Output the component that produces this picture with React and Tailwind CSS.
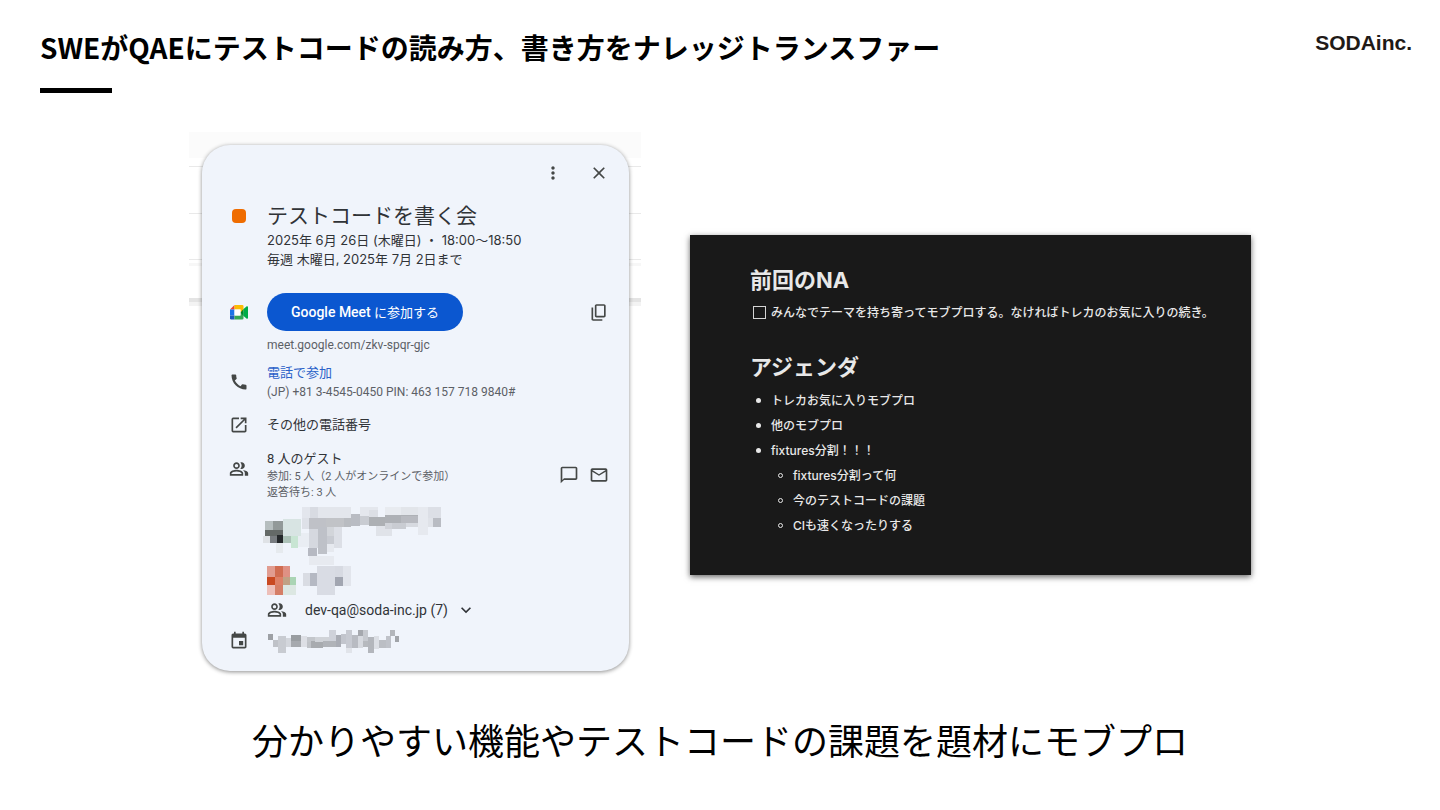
import {
  MdCall,
  MdChatBubbleOutline,
  MdClose,
  MdEvent,
  MdExpandMore,
  MdMailOutline,
  MdMoreVert,
  MdOpenInNew,
  MdOutlinePeopleAlt,
} from 'react-icons/md';

// [x, y, width, height, color]
const guestMosaic = [
  [182, 22, 26, 33, '#e3e6ed'],
  [208, 22, 22, 33, '#d8dbe2'],
  [230, 22, 100, 33, '#e3e6ec'],
  [358, 22, 52, 28, '#e4e7ed'],
  [384, 30, 26, 20, '#dcdfe5'],
  [432, 22, 48, 24, '#e8ebf0'],
  [480, 22, 52, 26, '#e2e5ea'],
  [532, 22, 30, 84, '#e6e9ef'],
  [562, 22, 37, 32, '#dcdfe6'],
  [576, 54, 23, 27, '#b9bcc3'],
  [562, 54, 14, 27, '#dfe2e8'],
  [330, 42, 28, 35, '#b9bcc3'],
  [308, 55, 22, 26, '#b9bcc1'],
  [256, 55, 52, 26, '#c1c3c7'],
  [204, 55, 52, 32, '#bfc1c7'],
  [182, 55, 22, 32, '#dee1e8'],
  [358, 48, 26, 26, '#c9ccd2'],
  [384, 50, 48, 27, '#adb0b4'],
  [432, 46, 100, 24, '#aeb1b6'],
  [480, 48, 52, 22, '#b8bac0'],
  [404, 77, 50, 30, '#e0e3e9'],
  [432, 70, 22, 18, '#d0d3d9'],
  [454, 70, 42, 18, '#c9ccd2'],
  [496, 70, 36, 12, '#d7dae0'],
  [204, 87, 26, 58, '#d5d8df'],
  [230, 81, 28, 82, '#bec1c8'],
  [258, 81, 22, 28, '#d2d5da'],
  [280, 81, 22, 28, '#dcdfe6'],
  [258, 109, 22, 22, '#c8cbd2'],
  [280, 109, 22, 36, '#dcdfe6'],
  [202, 145, 26, 22, '#b6b9c2'],
  [258, 131, 22, 26, '#e6e9ef'],
  [204, 168, 76, 26, '#e7eaf0'],
  [170, 100, 34, 40, '#e9edf3'],
  [72, 64, 24, 26, '#b6bebf'],
  [96, 64, 31, 26, '#929999'],
  [72, 90, 55, 18, '#646967'],
  [66, 108, 22, 20, '#dfe2e6'],
  [88, 108, 20, 20, '#787c80'],
  [108, 106, 19, 23, '#25282b'],
  [127, 56, 54, 52, '#d8e4e3'],
  [127, 108, 22, 22, '#adc2b8'],
  [149, 108, 22, 36, '#c8e5d3'],
  [106, 130, 20, 28, '#e6eaee'],
  // second guest
  [78, 198, 25, 33, '#e19c90'],
  [103, 198, 23, 33, '#d06c51'],
  [126, 198, 20, 33, '#df9184'],
  [78, 231, 25, 25, '#c94921'],
  [103, 231, 24, 25, '#dd8067'],
  [127, 231, 20, 25, '#c0a184'],
  [147, 231, 18, 25, '#aad4b4'],
  [78, 256, 25, 28, '#edbfb9'],
  [103, 256, 23, 28, '#d57e66'],
  [126, 256, 39, 28, '#dce7e2'],
  [186, 219, 22, 40, '#d9dce3'],
  [208, 219, 20, 40, '#b5b9c3'],
  [228, 198, 54, 87, '#d9dce4'],
  [282, 198, 24, 33, '#d7dae2'],
  [282, 231, 25, 27, '#a2a6b1'],
  [307, 198, 23, 60, '#e2e5ec'],
];

const calendarMosaic = [
  [232, 249, 15, 18, '#9da0a5'],
  [247, 267, 14, 20, '#bfc2c8'],
  [261, 254, 24, 53, '#c8cbd1'],
  [285, 262, 16, 26, '#d3d6dc'],
  [301, 252, 29, 17, '#999da1'],
  [301, 269, 29, 19, '#a6a9ae'],
  [330, 255, 17, 32, '#dddfe5'],
  [347, 257, 24, 16, '#c3c6cb'],
  [347, 273, 12, 18, '#c0c3c8'],
  [359, 271, 37, 20, '#a8abaf'],
  [371, 257, 43, 16, '#d0d3d8'],
  [396, 271, 38, 18, '#b0b3b8'],
  [414, 236, 20, 35, '#cfd2da'],
  [434, 252, 16, 37, '#a9acb4'],
  [450, 250, 14, 28, '#c2c5cd'],
  [464, 236, 19, 54, '#c7cad2'],
  [464, 290, 19, 15, '#e1e4ea'],
  [483, 252, 17, 38, '#b8bbc2'],
  [500, 236, 15, 18, '#a5a8ae'],
  [515, 236, 15, 46, '#c6c9cf'],
  [500, 254, 15, 36, '#d6d9df'],
  [515, 270, 15, 18, '#b6b9be'],
  [530, 257, 18, 50, '#b3b6bc'],
  [548, 255, 15, 38, '#dcdfe5'],
  [563, 268, 35, 24, '#bbbec4'],
  [584, 255, 15, 37, '#bfc2c9'],
  [598, 236, 13, 18, '#b3b6bb'],
  [611, 254, 14, 18, '#a1a4a9'],
];

const topics = ['トレカお気に入りモブプロ', '他のモブプロ', 'fixtures分割！！！'];
const subTopics = ['fixtures分割って何', '今のテストコードの課題', 'CIも速くなったりする'];

function Mosaic({ cells, viewBox, className }) {
  return (
    <svg viewBox={viewBox} className={className} shapeRendering="crispEdges" aria-hidden="true">
      {cells.map(([x, y, width, height, fill], index) => (
        <rect key={index} x={x} y={y} width={width} height={height} fill={fill} />
      ))}
    </svg>
  );
}

function MeetLogo() {
  return (
    <svg viewBox="0 0 36 30" className="h-[15px] w-[18px]" aria-hidden="true">
      <path fill="#ea4335" d="M0 9 9 0v9z" />
      <path fill="#fbbc04" d="M9 0h15.500a2.500 2.500 0 0 1 2.500 2.500V13l-6 2V9H9z" />
      <path fill="#1a73e8" d="M0 9h9v12H0z" />
      <path fill="#185abc" d="M0 21h9v8H2.500A2.500 2.500 0 0 1 0 26.500z" />
      <path fill="#34a853" d="M9 21h12v-6l6-1v12.500a2.500 2.500 0 0 1-2.500 2.500H9z" />
      <path fill="#00832d" d="M21 15l6-7v14z" />
      <path fill="#00ac47" d="M27 8l6.500-5.300c1-.8 2.500-.2 2.500 1.100v22.400c0 1.300-1.500 1.900-2.500 1.100L27 22z" />
      <path fill="#fff" d="M9 9h12v12H9z" />
    </svg>
  );
}

function CopyIcon() {
  return (
    <svg viewBox="0 -960 960 960" className="size-[21px]" fill="currentColor" aria-hidden="true">
      <path d="M360-240q-33 0-56.500-23.500T280-320v-480q0-33 23.500-56.500T360-880h360q33 0 56.500 23.500T800-800v480q0 33-23.500 56.500T720-240H360Zm0-80h360v-480H360v480ZM200-80q-33 0-56.500-23.500T120-160v-560h80v560h440v80H200Z" />
    </svg>
  );
}

function Row({ icon, children, action, className }) {
  return (
    <div className={`flex ${className}`}>
      <div className="flex w-[65px] shrink-0 items-center justify-center pl-2">{icon}</div>
      <div className="min-w-0 flex-1">{children}</div>
      {action}
    </div>
  );
}

function IconButton({ label, children }) {
  return (
    <button type="button" aria-label={label} className="flex size-5 items-center justify-center text-[#444746]">
      {children}
    </button>
  );
}

function EventCard() {
  return (
    <article className="rounded-[28px] bg-[#f0f4fb] pb-[17px] font-[Roboto,'Noto_Sans_CJK_JP',sans-serif] text-[13px] text-[#303337] shadow-[0_1px_4px_rgba(0,0,0,0.45)]">
      <div className="flex h-14 items-center justify-end gap-[26px] pr-5">
        <IconButton label="オプション"><MdMoreVert size={20} /></IconButton>
        <IconButton label="閉じる"><MdClose size={20} /></IconButton>
      </div>

      <div className="flex">
        <div className="flex w-[65px] shrink-0 justify-center pt-2 pl-2">
          <span className="size-[14px] rounded-[4px] bg-[#ef6c00]" />
        </div>
        <div>
          <h2 className="text-[21px] leading-[30px]">テストコードを書く会</h2>
          <div className="font-[Inter,'Noto_Sans_CJK_JP',sans-serif]">
            <p className="leading-[19px]">2025年 6月 26日 (木曜日) ・ 18:00〜18:50</p>
            <p className="leading-[19px]">毎週 木曜日, 2025年 7月 2日まで</p>
          </div>
        </div>
      </div>

      <Row
        className="mt-6"
        icon={<MeetLogo />}
        action={<div className="flex items-center pr-5"><IconButton label="コピー"><CopyIcon /></IconButton></div>}
      >
        <button type="button" className="h-[38px] w-[196px] rounded-full bg-[#0b57d0] text-white">
          <span className="text-[14px] font-medium">Google Meet</span> に参加する
        </button>
      </Row>
      <p className="mt-1 pl-[65px] text-[12px] leading-5 text-[#5c6066]">meet.google.com/zkv-spqr-gjc</p>

      <Row className="mt-2" icon={<MdCall size={20} className="text-[#444746]" />}>
        <a href="#phone" className="block leading-5 text-[#2b62c9]">電話で参加</a>
        <p className="text-[12px] leading-[18px] text-[#5c6066]">(JP) +81 3-4545-0450 PIN: 463 157 718 9840#</p>
      </Row>

      <Row className="mt-[14px]" icon={<MdOpenInNew size={20} className="text-[#444746]" />}>
        <p className="leading-5">その他の電話番号</p>
      </Row>

      <div className="mt-[14px] flex">
        <div className="flex w-[65px] shrink-0 justify-center pt-[10px] pl-2">
          <MdOutlinePeopleAlt size={20} className="text-[#444746]" />
        </div>
        <div className="flex-1">
          <p className="leading-5">8 人のゲスト</p>
          <p className="text-[11px] leading-4 text-[#5c6066]">参加: 5 人（2 人がオンラインで参加）</p>
          <p className="text-[11px] leading-4 text-[#5c6066]">返答待ち: 3 人</p>
        </div>
        <div className="flex items-center gap-[10px] pr-5">
          <IconButton label="チャット"><MdChatBubbleOutline size={20} /></IconButton>
          <IconButton label="メール"><MdMailOutline size={20} /></IconButton>
        </div>
      </div>

      <div className="mt-1 pl-[61px]">
        <Mosaic cells={guestMosaic} viewBox="66 15 540 282" className="h-[94px] w-[180px]" />
      </div>

      <div className="flex items-center pl-[65px] text-[14px] leading-[22px]">
        <MdOutlinePeopleAlt size={20} className="text-[#444746]" />
        <span className="ml-[18px]">dev-qa@soda-inc.jp (7)</span>
        <button type="button" aria-label="展開" className="ml-2"><MdExpandMore size={20} /></button>
      </div>

      <Row className="mt-[7px]" icon={<MdEvent size={20} className="text-[#444746]" />}>
        <Mosaic cells={calendarMosaic} viewBox="228 231 405 78" className="h-[26px] w-[135px]" />
      </Row>
    </article>
  );
}

function AgendaPanel() {
  return (
    <article className="w-[561px] bg-[#191919] pt-[31px] pr-8 pb-[37px] pl-[60px] font-[Inter,'Noto_Sans_CJK_JP',sans-serif] text-[12px] leading-[25px] font-medium text-[#e8e8e8] shadow-[0_2px_6px_rgba(0,0,0,0.6)]">
      <h2 className="text-[22px] leading-7 font-bold">前回のNA</h2>
      <label className="mt-[6px] flex items-center whitespace-nowrap">
        <input type="checkbox" className="mr-[5px] ml-[3px] size-[13px] shrink-0 appearance-none border border-[#d4d4d4]" />
        みんなでテーマを持ち寄ってモブプロする。なければトレカのお気に入りの続き。
      </label>

      <h2 className="mt-7 text-[22px] leading-7 font-bold">アジェンダ</h2>
      <ul className="mt-[7px]">
        {topics.map((topic) => (
          <li key={topic} className="flex items-center gap-[10px] pl-[6px]">
            <span className="size-[5px] rounded-full bg-[#e8e8e8]" />
            {topic}
          </li>
        ))}
        <li>
          <ul className="pl-[22px]">
            {subTopics.map((topic) => (
              <li key={topic} className="flex items-center gap-[10px] pl-[6px]">
                <span className="size-[5px] rounded-full border border-[#e8e8e8]" />
                {topic}
              </li>
            ))}
          </ul>
        </li>
      </ul>
    </article>
  );
}

export default function App() {
  return (
    <div className="min-h-screen bg-white pb-10 font-['Noto_Sans_CJK_JP',sans-serif] text-black">
      <header className="flex items-start justify-between pt-[31px] pr-7 pl-10">
        <div>
          <h1 className="text-[28px] leading-8 font-bold">SWEがQAEにテストコードの読み方、書き方をナレッジトランスファー</h1>
          <div className="mt-[25px] h-[5px] w-[72px] bg-black" />
        </div>
        <div className="flex font-['Liberation_Sans',sans-serif] text-[21px] leading-6 font-bold text-[#1f1a17]">
          <span>SODA</span>
          <span>inc.</span>
        </div>
      </header>

      <main className="mt-[39px] flex flex-wrap items-center justify-center gap-[49px]">
        {/* calendar grid peeks out behind the event card */}
        <div className="w-[452px] bg-[linear-gradient(#fbfbfb_0_26px,#fff_26px_34px,#e9e9e9_34px_35px,#fff_35px_81px,#e9e9e9_81px_82px,#fff_82px_127px,#e9e9e9_127px_128px,#fff_128px_131px,#f7f7f7_131px_134px,#fff_134px_166px,#e4e4e4_166px_170px,#f3f3f3_170px_174px,#fff_174px)] pt-[13px] pr-3 pb-[7px] pl-[13px]">
          <EventCard />
        </div>
        <AgendaPanel />
      </main>

      <p className="mt-9 text-center text-[36px] leading-[50px]">分かりやすい機能やテストコードの課題を題材にモブプロ</p>
    </div>
  );
}
